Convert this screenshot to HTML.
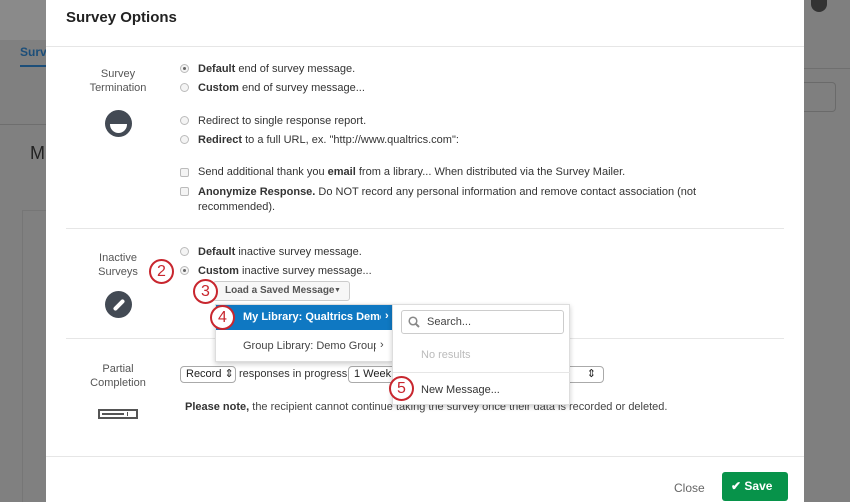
<!DOCTYPE html>
<html><head><meta charset="utf-8"><style>
*{box-sizing:border-box;margin:0;padding:0}
body{width:850px;height:502px;overflow:hidden;background:#7f7f7f;font-family:"Liberation Sans",sans-serif;font-size:11px;color:#333;position:relative}
.a{position:absolute}
.modal{left:46px;top:0;width:758px;height:502px;background:#fff}
.hl{height:1px;background:#e6e6e6}
.lbl{width:100px;text-align:center;color:#555;font-size:11px;line-height:14px}
.rad{width:9px;height:9px;border-radius:50%;border:1px solid #bbb;background:#f4f4f4}
.rad.on::after{content:"";position:absolute;left:2px;top:2px;width:3px;height:3px;border-radius:50%;background:#666}
.chk{width:9px;height:9px;border:1px solid #bbb;border-radius:2px;background:#f4f4f4}
.t{white-space:nowrap;color:#333}
b{color:#333}
.circ{width:25px;height:25px;border-radius:50%;border:2px solid #c8262e;background:#fff;color:#c8262e;font-size:16px;text-align:center;line-height:21px}
.sel{border:1px solid #aaa;border-radius:4px;height:17px;line-height:15px;padding-left:5px;background:#fff;color:#222;white-space:nowrap}
</style></head><body>
<div class="a" style="left:0;top:0;width:46px;height:502px;background:#808080"></div>
<div class="a" style="left:0;top:0;width:46px;height:40px;background:#8a8a8a"></div>
<div class="a" style="left:20px;top:45px;color:#1c4e79;font-weight:bold;font-size:12px">Surv</div>
<div class="a" style="left:20px;top:65px;width:26px;height:2px;background:#1c4e79"></div>
<div class="a" style="left:0;top:124px;width:46px;height:1px;background:#6e6e6e"></div>
<div class="a" style="left:30px;top:143px;font-size:18px;color:#222">M</div>
<div class="a" style="left:22px;top:210px;width:24px;height:292px;border-left:1px solid #767676;border-top:1px solid #767676"></div>
<div class="a" style="left:804px;top:0;width:46px;height:502px;background:#7f7f7f"></div>
<div class="a" style="left:811px;top:0;width:16px;height:12px;border-radius:0 0 8px 8px;background:#333"></div>
<div class="a" style="left:804px;top:68px;width:46px;height:1px;background:#6f6f6f"></div>
<div class="a" style="left:804px;top:82px;width:32px;height:30px;border:1px solid #6a6a6a;border-left:none;border-radius:0 4px 4px 0"></div>

<div class="a modal">
<div class="a" style="left:20px;top:9px;font-size:15px;font-weight:bold;color:#222">Survey Options</div>
<div class="a hl" style="left:0;top:46px;width:758px"></div>

<div class="a lbl" style="left:22px;top:67px">Survey<br>Termination</div>
<div class="a" style="left:59px;top:110px;width:27px;height:27px;border-radius:50%;background:#434a54;overflow:hidden"><div class="a" style="left:5px;top:14px;width:17px;height:9px;background:#fff;border-radius:0 0 9px 9px"></div></div>

<div class="a rad on" style="left:134px;top:64px"></div><div class="a t" style="left:152px;top:63px"><b>Default</b> end of survey message.</div>
<div class="a rad" style="left:134px;top:83px"></div><div class="a t" style="left:152px;top:82px"><b>Custom</b> end of survey message...</div>
<div class="a rad" style="left:134px;top:116px"></div><div class="a t" style="left:152px;top:115px">Redirect to single response report.</div>
<div class="a rad" style="left:134px;top:135px"></div><div class="a t" style="left:152px;top:134px"><b>Redirect</b> to a full URL, ex. "http://www.qualtrics.com":</div>
<div class="a chk" style="left:134px;top:168px"></div><div class="a t" style="left:152px;top:166px">Send additional thank you <b>email</b> from a library... When distributed via the Survey Mailer.</div>
<div class="a chk" style="left:134px;top:187px"></div><div class="a" style="left:152px;top:185px;width:540px;line-height:15px"><b>Anonymize Response.</b> Do NOT record any personal information and remove contact association (not recommended).</div>

<div class="a hl" style="left:20px;top:228px;width:718px"></div>

<div class="a lbl" style="left:22px;top:251px">Inactive<br>Surveys</div>
<div class="a" style="left:59px;top:291px;width:27px;height:27px;border-radius:50%;background:#434a54"><div class="a" style="left:7px;top:12px;width:14px;height:4px;background:#fff;border-radius:2px;transform:rotate(-45deg)"></div></div>
<div class="a rad" style="left:134px;top:247px"></div><div class="a t" style="left:152px;top:246px"><b>Default</b> inactive survey message.</div>
<div class="a rad on" style="left:134px;top:266px"></div><div class="a t" style="left:152px;top:265px"><b>Custom</b> inactive survey message...</div>
<div class="a" style="left:167px;top:281px;width:137px;height:20px;border:1px solid #ccc;border-radius:3px;background:#f7f7f7;font-size:10px;font-weight:bold;color:#555;line-height:18px;padding-left:11px;white-space:nowrap">Load a Saved Message<span class="a" style="left:120px;top:0;font-size:7px">▼</span></div>

<div class="a hl" style="left:20px;top:338px;width:718px"></div>

<div class="a lbl" style="left:22px;top:362px">Partial<br>Completion</div>
<div class="a" style="left:52px;top:409px;width:40px;height:10px;border:2px solid #555;background:#fff"><div class="a" style="left:2px;top:2px;width:22px;height:2px;background:#555"></div><div class="a" style="left:27px;top:1px;width:1px;height:4px;background:#555"></div></div>
<div class="a sel" style="left:134px;top:366px;width:56px">Record ⇕</div>
<div class="a t" style="left:193px;top:368px">responses in progress</div>
<div class="a sel" style="left:302px;top:366px;width:256px">1 Week<span style="position:absolute;right:7px">⇕</span><span style="position:absolute;left:215px">y</span></div>
<div class="a t" style="left:139px;top:401px;color:#444"><b>Please note,</b> the recipient cannot continue taking the survey once their data is recorded or deleted.</div>

<div class="a hl" style="left:0;top:456px;width:758px"></div>
<div class="a" style="left:628px;top:481px;font-size:12px;color:#666">Close</div>
<div class="a" style="left:676px;top:472px;width:66px;height:29px;background:#07934a;border-radius:3px;color:#fff;font-weight:bold;font-size:12px;line-height:29px;padding-left:9px">✔ Save</div>

<div class="a" style="left:169px;top:304px;width:178px;height:58px;background:#fff;border:1px solid #ddd;box-shadow:0 2px 5px rgba(0,0,0,.2)">
<div class="a" style="left:0;top:0;width:177px;height:25px;background:#0f78c2;color:#fff;font-weight:bold;line-height:25px;padding-left:27px;white-space:nowrap;overflow:hidden">My Library: Qualtrics Demo<span class="a" style="left:165px;top:-1px;background:#0f78c2;padding-left:4px;width:12px">›</span></div>
<div class="a" style="left:0;top:29px;width:176px;height:25px;color:#444;line-height:25px;padding-left:27px;white-space:nowrap;overflow:hidden">Group Library: Demo Group<span class="a" style="left:160px;top:-1px;background:#fff;padding-left:4px;width:16px">›</span></div>
</div>
<div class="a" style="left:346px;top:304px;width:178px;height:101px;background:#fff;border:1px solid #ddd;box-shadow:0 2px 5px rgba(0,0,0,.2)">
<div class="a" style="left:8px;top:5px;width:163px;height:24px;border:1px solid #ccc;border-radius:3px;line-height:22px;padding-left:25px;color:#444">Search...
<svg class="a" style="left:6px;top:5px" width="12" height="12" viewBox="0 0 12 12"><circle cx="5" cy="5" r="3.8" stroke="#888" stroke-width="1.5" fill="none"/><path d="M7.8 7.8L11 11" stroke="#888" stroke-width="2"/></svg></div>
<div class="a" style="left:28px;top:44px;color:#bbb">No results</div>
<div class="a hl" style="left:0;top:67px;width:177px"></div>
<div class="a" style="left:28px;top:79px;color:#333">New Message...</div>
</div>

<div class="a circ" style="left:103px;top:259px">2</div>
<div class="a circ" style="left:147px;top:279px">3</div>
<div class="a circ" style="left:164px;top:305px">4</div>
<div class="a circ" style="left:343px;top:376px">5</div>
</div>
</body></html>
